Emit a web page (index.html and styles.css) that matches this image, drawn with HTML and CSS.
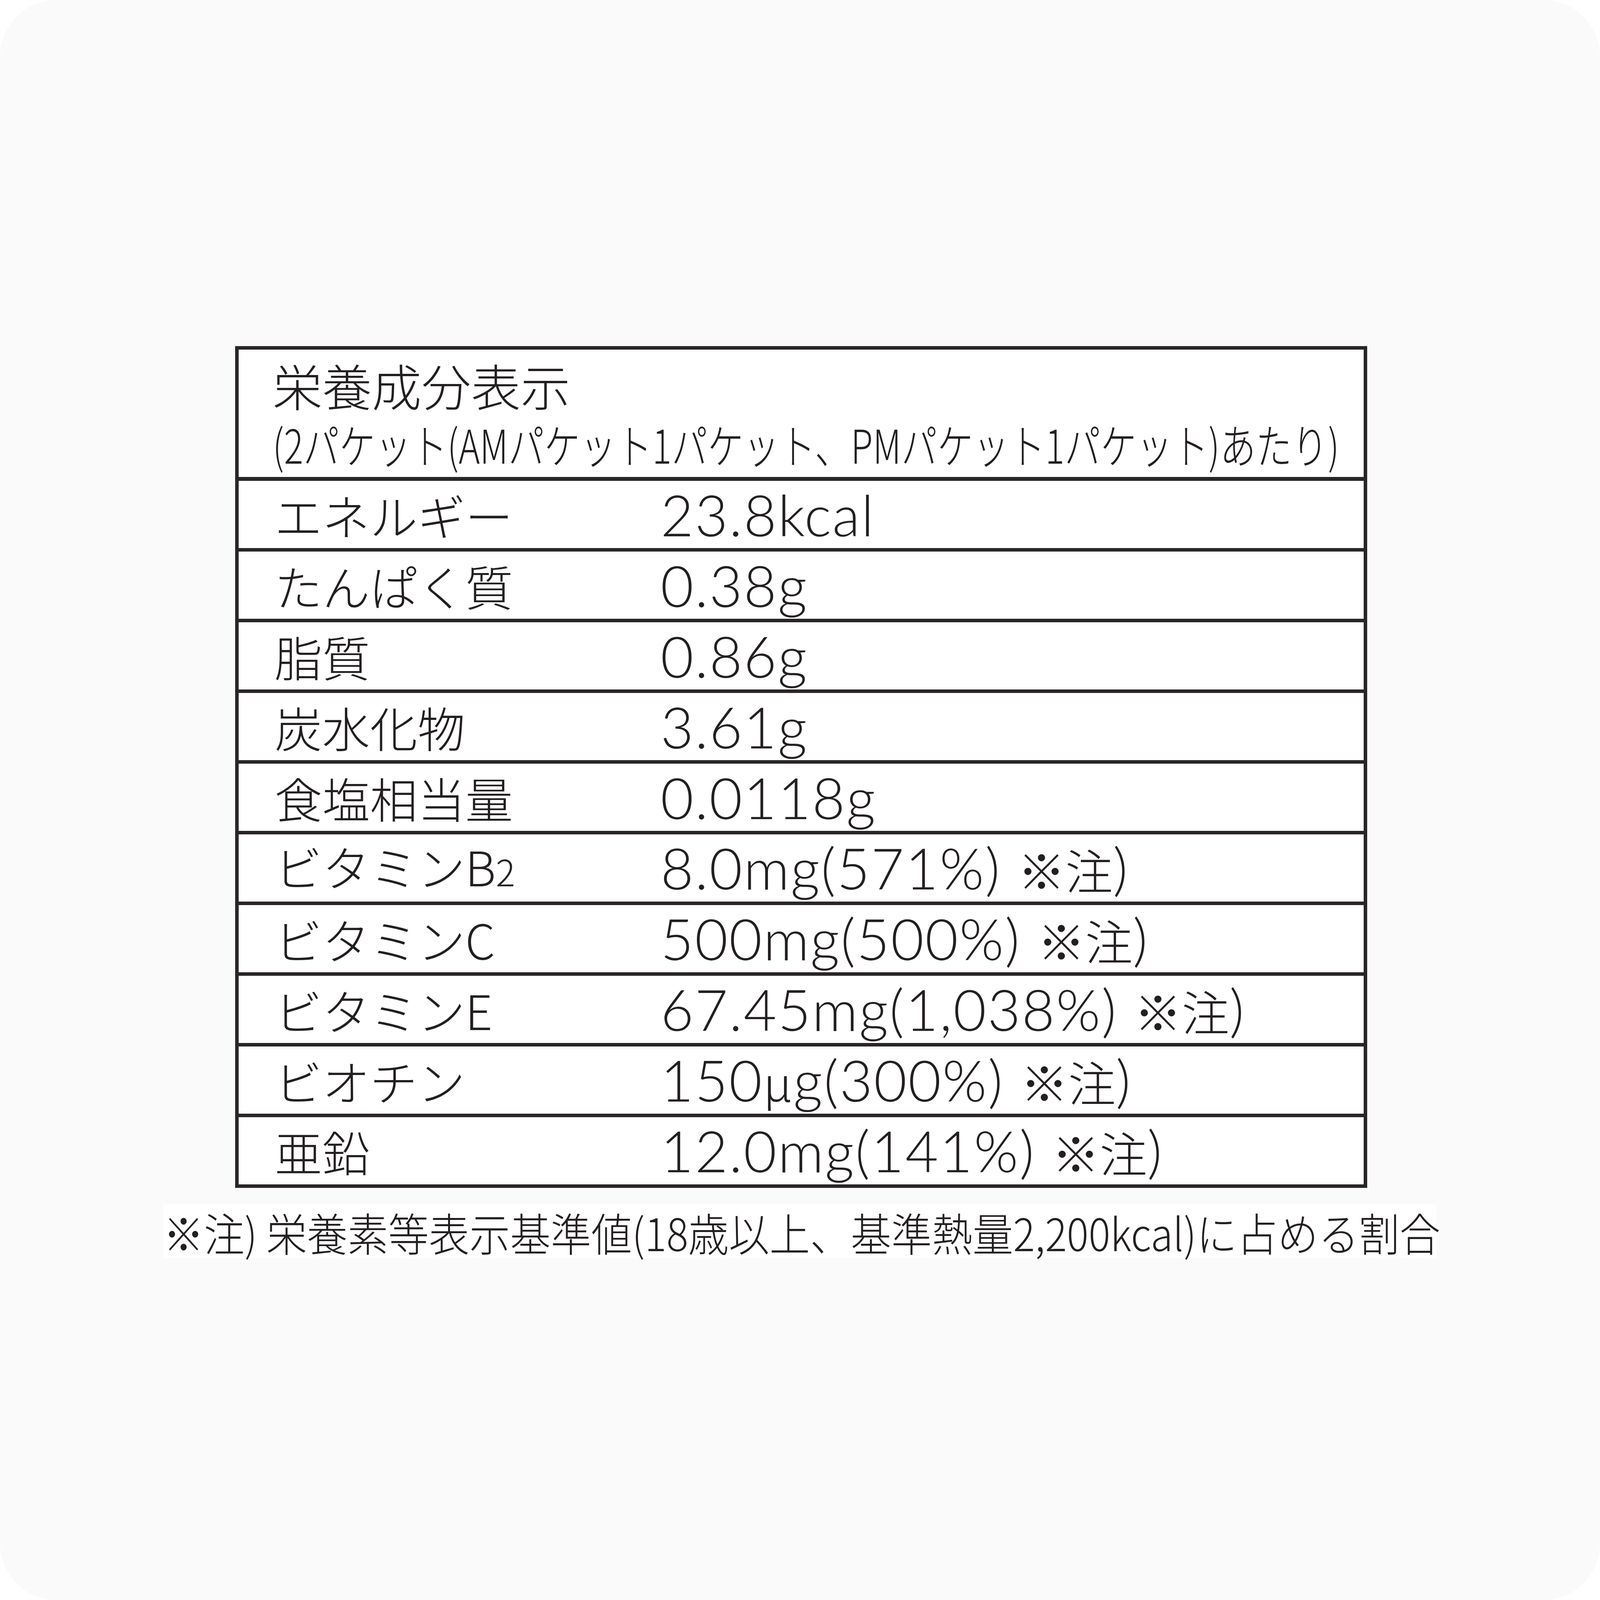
FILE: index.html
```html
<!DOCTYPE html>
<html lang="ja">
<head>
<meta charset="utf-8">
<title>栄養成分表示</title>
<link rel="stylesheet" href="styles.css">
</head>
<body>
<div class="page">
  <div class="table">
    <div class="head">
      <div class="title">栄養成分表示</div>
      <div class="subtitle"><span class="cond">(2パケット(AMパケット1パケット、PMパケット1パケット)あたり)</span></div>
    </div>
    <div class="row"><div class="label">エネルギー</div><div class="value">23.8kcal</div></div>
    <div class="row"><div class="label">たんぱく質</div><div class="value">0.38g</div></div>
    <div class="row"><div class="label">脂質</div><div class="value">0.86g</div></div>
    <div class="row"><div class="label">炭水化物</div><div class="value">3.61g</div></div>
    <div class="row"><div class="label">食塩相当量</div><div class="value">0.0118g</div></div>
    <div class="row"><div class="label">ビタミンB<span class="small">2</span></div><div class="value">8.0mg(571%) <span class="jp">※注</span>)</div></div>
    <div class="row"><div class="label">ビタミンC</div><div class="value">500mg(500%) <span class="jp">※注</span>)</div></div>
    <div class="row"><div class="label">ビタミンE</div><div class="value">67.45mg(1,038%) <span class="jp">※注</span>)</div></div>
    <div class="row"><div class="label">ビオチン</div><div class="value">150<span class="mu">μ</span>g(300%) <span class="jp">※注</span>)</div></div>
    <div class="row"><div class="label">亜鉛</div><div class="value">12.0mg(141%) <span class="jp">※注</span>)</div></div>
  </div>
  <div class="note"><span class="cond2">※注) 栄養素等表示基準値(18歳以上、基準熱量2,200kcal)に占める割合</span></div>
</div>
</body>
</html>
```

FILE: styles.css
```css
html, body {
  margin: 0;
  padding: 0;
  background: #ffffff;
  overflow: hidden;
}

.page {
  width: 100vw;
  height: 100vh;
  box-sizing: border-box;
  background: #fafafa;
  border-radius: 145px;
  padding-top: 886px;
  display: flex;
  flex-direction: column;
  align-items: flex-start;
  color: #231f20;
  font-family: "Noto Sans CJK JP", "Noto Sans", sans-serif;
  font-weight: 300;
}

.table {
  margin-left: 602px;
  width: 2898px;
  box-sizing: border-box;
  border: 9px solid #2a2626;
  background: #ffffff;
  display: flex;
  flex-direction: column;
}

.head {
  height: 336px;
  box-sizing: border-box;
  border-bottom: 10px solid #2a2626;
  padding: 27px 0 0 87px;
}

.title {
  font-size: 127px;
  line-height: 127px;
  white-space: nowrap;
}

.subtitle {
  margin-top: 26px;
  height: 120px;
  font-size: 92.2px;
  line-height: 120px;
  white-space: nowrap;
}

.cond {
  display: inline-block;
  line-height: 120px;
  vertical-align: top;
  transform: scaleY(1.3);
  transform-origin: center center;
}

.row {
  height: 181px;
  box-sizing: border-box;
  border-bottom: 9px solid #2a2626;
  display: grid;
  grid-template-columns: 1080px 1fr;
  align-items: center;
}

.row:last-child {
  height: 172px;
  border-bottom: none;
}

.label {
  padding-left: 92px;
  font-size: 122px;
  line-height: 122px;
  white-space: nowrap;
}

.small {
  font-size: 0.76em;
}

.value {
  font-family: "Lato", "Noto Sans CJK JP", sans-serif;
  font-weight: 300;
  font-size: 146px;
  line-height: 146px;
  letter-spacing: 3px;
  white-space: nowrap;
}

.value .jp {
  font-family: "Noto Sans CJK JP", sans-serif;
  font-size: 122px;
  letter-spacing: 0;
}

.value .mu {
  font-family: "Noto Sans CJK JP", sans-serif;
  font-size: 122px;
}

.note {
  margin-left: 418px;
  margin-top: 40px;
  width: 3259px;
  height: 140px;
  box-sizing: border-box;
  padding-top: 4px;
  background: #ffffff;
  display: flex;
  align-items: center;
  font-size: 104px;
  line-height: 114px;
  white-space: nowrap;
}

.cond2 {
  display: inline-block;
  line-height: 114px;
  transform: scaleY(1.104);
  transform-origin: center center;
}
```
